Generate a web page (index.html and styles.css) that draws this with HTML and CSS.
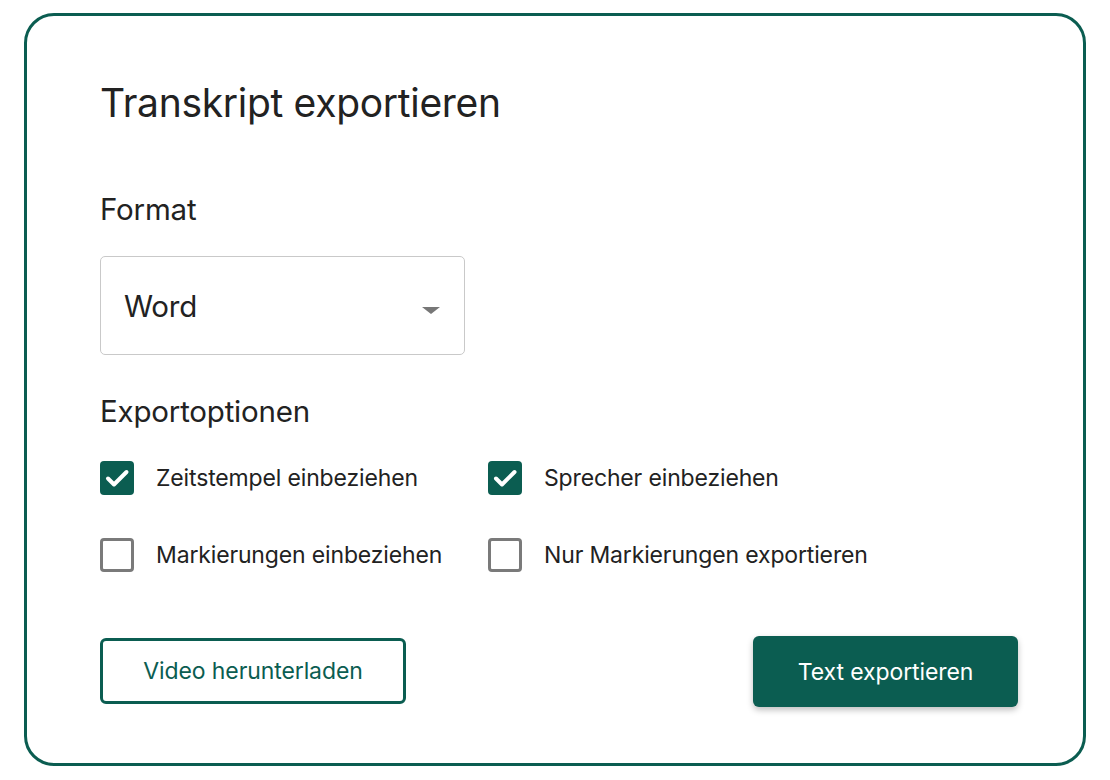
FILE: index.html
```html
<!DOCTYPE html>
<html lang="de">
<head>
<meta charset="utf-8">
<title>Transkript exportieren</title>
<link rel="stylesheet" href="styles.css">
</head>
<body>
<div class="card">
  <h1 class="title">Transkript exportieren</h1>
  <h2 class="label">Format</h2>
  <div class="select">
    <span class="select-value">Word</span>
    <span class="caret"></span>
  </div>
  <h2 class="label label-options">Exportoptionen</h2>
  <div class="options">
    <label class="option">
      <span class="box checked"><svg viewBox="0 0 34 34" width="34" height="34"><path d="M8 17.5 L14 23.5 L26.5 11" fill="none" stroke="#fff" stroke-width="4" stroke-linecap="round" stroke-linejoin="round"/></svg></span>
      <span class="option-text">Zeitstempel einbeziehen</span>
    </label>
    <label class="option">
      <span class="box checked"><svg viewBox="0 0 34 34" width="34" height="34"><path d="M8 17.5 L14 23.5 L26.5 11" fill="none" stroke="#fff" stroke-width="4" stroke-linecap="round" stroke-linejoin="round"/></svg></span>
      <span class="option-text">Sprecher einbeziehen</span>
    </label>
    <label class="option">
      <span class="box"></span>
      <span class="option-text">Markierungen einbeziehen</span>
    </label>
    <label class="option">
      <span class="box"></span>
      <span class="option-text">Nur Markierungen exportieren</span>
    </label>
  </div>
  <div class="actions">
    <button class="btn btn-outline">Video herunterladen</button>
    <button class="btn btn-primary">Text exportieren</button>
  </div>
</div>
</body>
</html>
```
FILE: styles.css
```css
* { box-sizing: border-box; }
html, body { background: #fff; }
body {
  margin: 0;
  padding: 13px 24px 14px;
  font-family: "Inter", "Liberation Sans", sans-serif;
  color: #222;
}
.card {
  height: 753px;
  border: 3px solid #0b5d51;
  border-radius: 30px;
  padding: 62px 65px 0 73px;
}
.title {
  margin: 0;
  font-size: 39px;
  font-weight: 400;
  line-height: 50px;
  letter-spacing: -0.3px;
  color: #222;
}
.label {
  margin: 0;
  font-size: 29.5px;
  font-weight: 400;
  line-height: 36px;
  letter-spacing: -0.2px;
  color: #222;
  margin-top: 63px;
}
.select {
  margin-top: 29px;
  width: 365px;
  height: 99px;
  border: 1.5px solid #c9c9c9;
  border-radius: 5px;
  display: flex;
  align-items: center;
  justify-content: space-between;
  padding: 0 24px 0 23px;
}
.select-value {
  font-size: 29.5px;
  letter-spacing: -0.2px;
  color: #222;
}
.caret {
  width: 0;
  height: 0;
  border-left: 9.5px solid transparent;
  border-right: 9.5px solid transparent;
  border-top: 7px solid #777;
  margin-top: 10px;
}
.label-options { margin-top: 38px; }
.options {
  margin-top: 32px;
  display: grid;
  grid-template-columns: 388px auto;
  row-gap: 43px;
}
.option {
  display: flex;
  align-items: center;
  gap: 22px;
  height: 34px;
}
.box {
  width: 34px;
  height: 34px;
  flex: none;
  border: 3px solid #7a7a7a;
  border-radius: 4px;
  background: #fff;
  display: block;
}
.box.checked {
  border: none;
  background: #0b5d51;
}
.box svg { display: block; }
.option-text {
  font-size: 23px;
  letter-spacing: -0.15px;
  color: #222;
}
.actions {
  margin-top: 63px;
  display: flex;
  justify-content: space-between;
  align-items: center;
}
.btn {
  font-family: inherit;
  font-size: 23px;
  letter-spacing: -0.1px;
  border-radius: 6px;
  cursor: pointer;
}
.btn-outline {
  width: 306px;
  height: 66px;
  background: #fff;
  color: #0b5d51;
  border: 3px solid #0b5d51;
}
.btn-primary {
  width: 265px;
  height: 71px;
  margin-top: 1px;
  background: #0b5d51;
  color: #fff;
  border: none;
  box-shadow: 0 3px 6px rgba(0,0,0,0.25);
}
```
